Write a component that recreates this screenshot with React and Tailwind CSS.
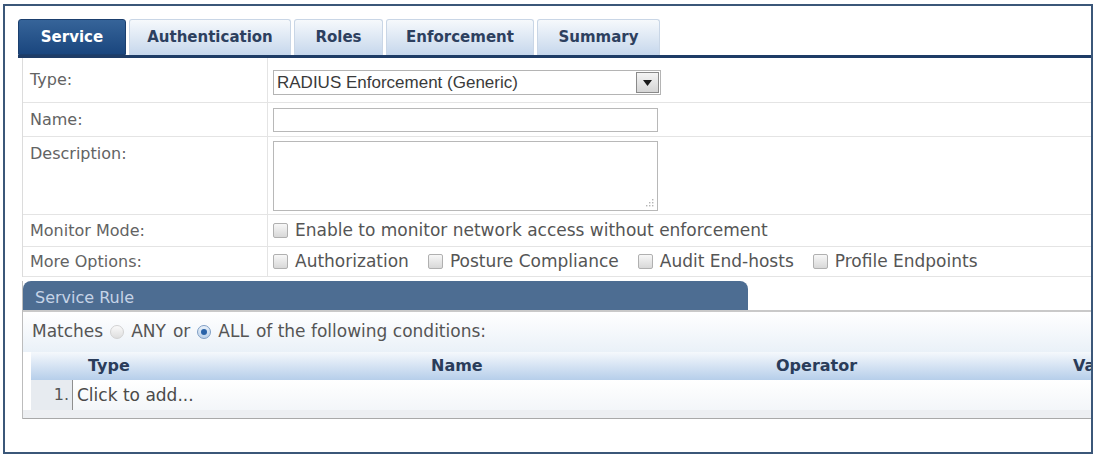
import { useState } from 'react';

const tabs = [
  { id: 'service', label: 'Service', w: 'w-[108px]' },
  { id: 'authentication', label: 'Authentication', w: 'w-[162px]' },
  { id: 'roles', label: 'Roles', w: 'w-[89px]' },
  { id: 'enforcement', label: 'Enforcement', w: 'w-[148px]' },
  { id: 'summary', label: 'Summary', w: 'w-[123px]' },
];

const moreOptions = ['Authorization', 'Posture Compliance', 'Audit End-hosts', 'Profile Endpoints'];

const CheckBox = () => (
  <span className="w-[15px] h-[15px] shrink-0 rounded-[2px] border border-[#b0b0b0] bg-linear-to-b from-[#f7f7f7] to-[#d8d8d8]" />
);

const Radio = ({ checked }) => (
  <span
    className={`w-[14px] h-[14px] shrink-0 rounded-full border flex items-center justify-center ${
      checked ? 'border-[#7f9ec4] bg-linear-to-b from-[#e9f1fa] to-[#bcd2ea]' : 'border-[#d2d2d2] bg-linear-to-b from-[#fafafa] to-[#dedede]'
    }`}
  >
    {checked && <span className="w-[6px] h-[6px] rounded-full bg-[#2a63a8]" />}
  </span>
);

const FormRow = ({ label, h, align = 'items-center', labelPad = '', valuePad = '', children }) => (
  <div className={`flex ${h} border-b border-[#e4e4e4]`}>
    <div className={`w-[245px] shrink-0 border-r border-[#e4e4e4] pl-[7px] flex ${align} ${labelPad}`}>
      <span className="text-[16px] leading-[20px] text-[#636363]">{label}</span>
    </div>
    <div className={`flex-1 pl-[5px] flex ${align} ${valuePad}`}>{children}</div>
  </div>
);

export default function App() {
  const [activeTab, setActiveTab] = useState('service');
  const [match, setMatch] = useState('all');

  return (
    <div className="w-[1096px] h-[456px] bg-white overflow-hidden pt-[4px] pl-[3px] font-['DejaVu_Sans',Verdana,sans-serif]">
      <div className="w-[1090px] h-[450px] border-2 border-[#3b5779] bg-white overflow-hidden pl-[13px] pt-[13px]">
        <div className="w-[1100px]">
          {/* Tab strip */}
          <div className="flex gap-[3px] h-[39px] border-b-[3px] border-[#1e3c66]">
            {tabs.map((t) => (
              <button
                key={t.id}
                onClick={() => setActiveTab(t.id)}
                className={`${t.w} h-full rounded-t-[3px] text-[15px] font-bold flex items-center justify-center ${
                  activeTab === t.id
                    ? 'bg-linear-to-b from-[#366499] to-[#1a467e] text-white border border-[#1b3f6e]'
                    : 'bg-linear-to-b from-[#f6f9fc] to-[#c6d7ec] text-[#2d405f] border border-[#c9d6e6] border-b-0'
                }`}
              >
                {t.label}
              </button>
            ))}
          </div>

          {/* Service form */}
          <div className="ml-[4px] border-l border-[#dcdcdc]">
            <FormRow label="Type:" h="h-[45px]" align="items-start" labelPad="pt-[12px]" valuePad="pt-[12px]">
              <div className="flex w-[388px] h-[25px] border border-[#b4b4b4] bg-white">
                <span className="flex-1 pl-[3px] text-[17px] leading-[23px] text-[#3a3a3a] font-['Liberation_Sans',Arial,sans-serif]">
                  RADIUS Enforcement (Generic)
                </span>
                <span className="w-[23px] m-px border border-[#8a8a8a] bg-linear-to-b from-[#f4f4f4] to-[#d5d5d5] flex items-center justify-center">
                  <svg width="9" height="6" viewBox="0 0 9 6">
                    <path d="M0 0h9L4.5 6z" fill="#1a1a1a" />
                  </svg>
                </span>
              </div>
            </FormRow>

            <FormRow label="Name:" h="h-[34px]">
              <input className="w-[385px] h-[24px] border border-[#b8b8b8] bg-white outline-none" />
            </FormRow>

            <FormRow label="Description:" h="h-[78px]" align="items-start" labelPad="pt-[7px]" valuePad="pt-[4px]">
              <div className="relative w-[385px] h-[70px] border border-[#b8b8b8] bg-white">
                <svg className="absolute right-[3px] bottom-[3px]" width="9" height="9" viewBox="0 0 9 9">
                  <g fill="#b5b5b5">
                    <rect x="7" y="1" width="1.4" height="1.4" />
                    <rect x="4" y="4" width="1.4" height="1.4" />
                    <rect x="7" y="4" width="1.4" height="1.4" />
                    <rect x="1" y="7" width="1.4" height="1.4" />
                    <rect x="4" y="7" width="1.4" height="1.4" />
                    <rect x="7" y="7" width="1.4" height="1.4" />
                  </g>
                </svg>
              </div>
            </FormRow>

            <FormRow label="Monitor Mode:" h="h-[32px]">
              <label className="flex items-center gap-[7px] text-[17px] text-[#555]">
                <CheckBox />
                Enable to monitor network access without enforcement
              </label>
            </FormRow>

            <FormRow label="More Options:" h="h-[30px]">
              <div className="flex items-center gap-[19px]">
                {moreOptions.map((o) => (
                  <label key={o} className="flex items-center gap-[7px] text-[17px] text-[#555]">
                    <CheckBox />
                    {o}
                  </label>
                ))}
              </div>
            </FormRow>
          </div>

          {/* Service rule */}
          <div className="mt-[4px] ml-[4px] border-l border-[#bcbcbc]">
            <div className="border-b-2 border-[#c9c9c9]">
              <div className="w-[725px] h-[29px] rounded-t-[8px] bg-[#4d6d92] pl-[12px] pt-[7px] text-[16px] leading-[20px] text-[#c6d4e7]">
                Service Rule
              </div>
            </div>

            <div className="h-[40px] pl-[9px] flex items-center gap-[7px] text-[17px] text-[#555] bg-linear-to-b from-white to-[#eaf1f8]">
              <span>Matches</span>
              <span onClick={() => setMatch('any')} className="flex items-center gap-[7px]">
                <Radio checked={match === 'any'} />
                ANY
              </span>
              <span>or</span>
              <span onClick={() => setMatch('all')} className="flex items-center gap-[7px]">
                <Radio checked={match === 'all'} />
                ALL
              </span>
              <span>of the following conditions:</span>
            </div>

            <div className="ml-[8px]">
              <div className="flex h-[28px] items-center bg-linear-to-b from-[#f5f8fc] to-[#b6ceea] text-[16px] font-bold text-[#2a3c5a]">
                <span className="w-[42px] shrink-0" />
                <span className="w-[342px] shrink-0 pl-[15px]">Type</span>
                <span className="w-[345px] shrink-0 pl-[16px]">Name</span>
                <span className="w-[297px] shrink-0 pl-[16px]">Operator</span>
                <span className="pl-[16px]">Value</span>
              </div>
              <div className="flex h-[30px] bg-linear-to-b from-white to-[#f3f6f9]">
                <span className="w-[42px] shrink-0 bg-[#e7ebf0] border-r border-[#8f8f8f] text-right pr-[3px] text-[16px] leading-[30px] text-[#555]">
                  1.
                </span>
                <span className="pl-[4px] text-[17px] leading-[30px] text-[#4a4a4a]">Click to add...</span>
              </div>
            </div>
            <div className="h-[9px] bg-[#edeff2] border-b border-[#a9a9a9]" />
          </div>
        </div>
      </div>
    </div>
  );
}
